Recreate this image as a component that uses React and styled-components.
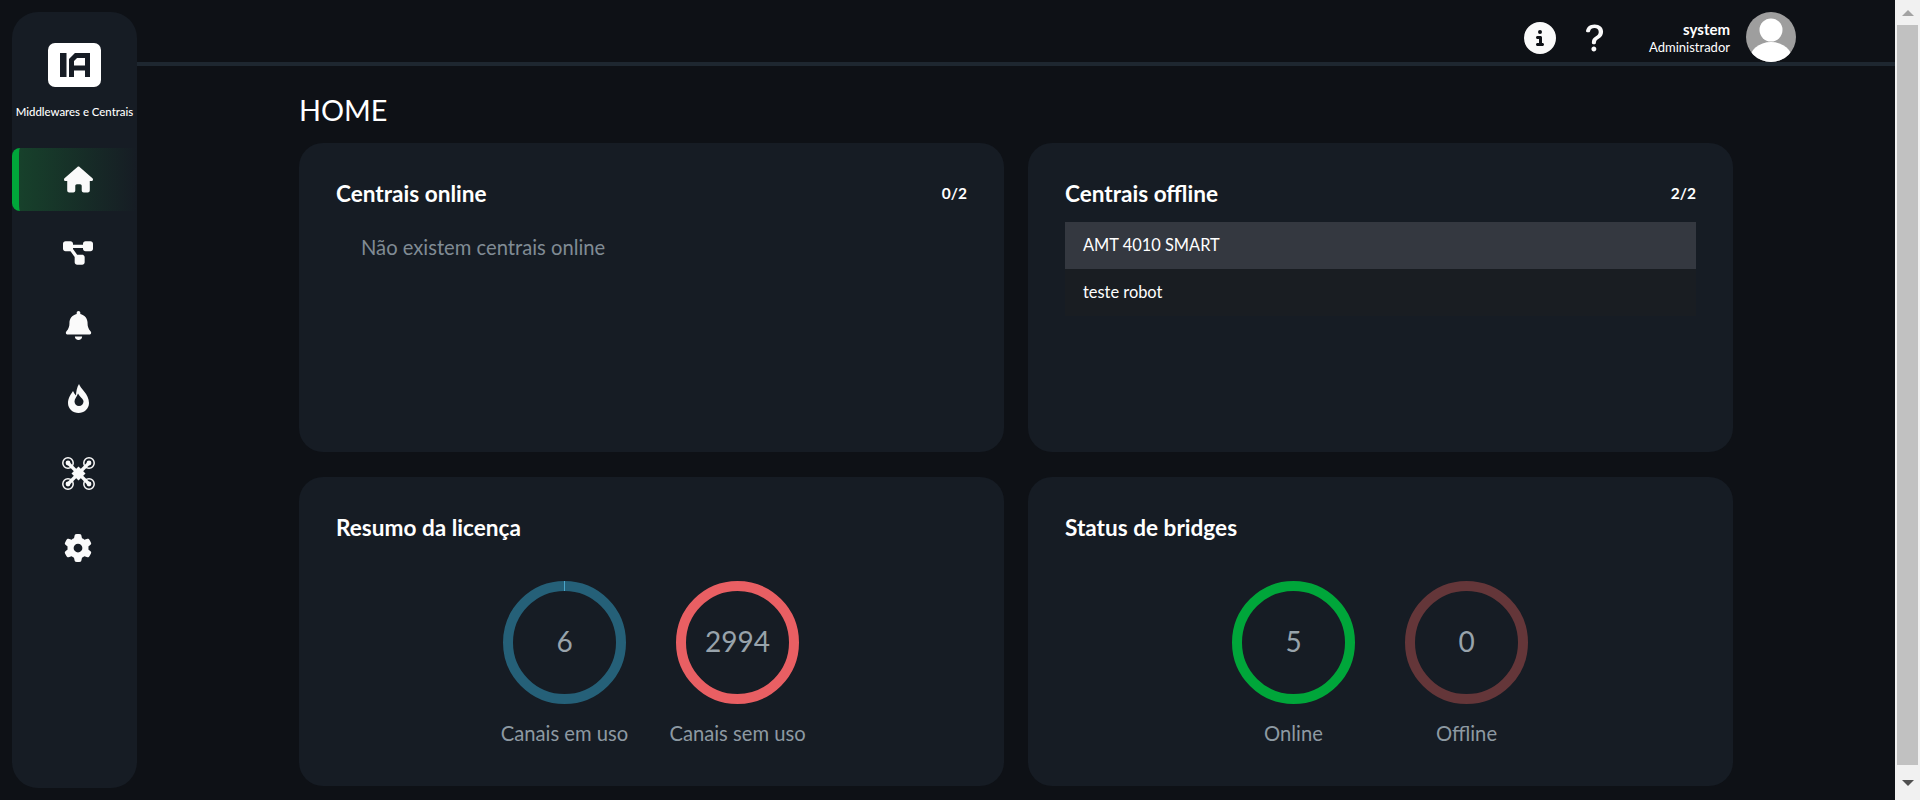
import React from "react";
import styled, { createGlobalStyle } from "styled-components";
import { FaHouse, FaDiagramProject, FaBell, FaGear, FaCircleInfo } from "react-icons/fa6";
import { BsQuestionLg } from "react-icons/bs";

const Global = createGlobalStyle`
  html, body { margin: 0; height: 100%; overflow: hidden; background: #0e1116; }
  body { font-family: "Lato", "Noto Sans", sans-serif; color: #fff; }
  * { box-sizing: border-box; }
`;

const Page = styled.div`
  display: flex;
  width: 1920px;
  height: 800px;
  background: #0e1116;
`;

const Sidebar = styled.aside`
  flex: 0 0 125px;
  height: 776px;
  margin: 12px 0 0 12px;
  padding-top: 31px;
  border-radius: 26px;
  background: #161c24;
  display: flex;
  flex-direction: column;
  align-items: center;
`;

const Caption = styled.div`
  margin-top: 17px;
  font-size: 11.4px;
  line-height: 16px;
  font-weight: 500;
  white-space: nowrap;
`;

const Nav = styled.nav`
  align-self: stretch;
  margin-top: 28px;
  display: flex;
  flex-direction: column;
  gap: 10px;
`;

const NavItem = styled.a`
  height: 63px;
  margin-top: ${p => p.$shift || 0}px;
  display: flex;
  align-items: center;
  justify-content: center;
  color: #fafafa;
  border-radius: 8px 0 0 8px;
  border-left: 7px solid ${p => (p.$active ? "#00a63a" : "transparent")};
  background: ${p => (p.$active ? "linear-gradient(90deg, #17412b 0%, #16301f00 100%)" : "none")};
`;

const Main = styled.div`
  flex: 1;
  min-width: 0;
  display: flex;
  flex-direction: column;
`;

const Header = styled.header`
  height: 66px;
  border-bottom: 4px solid #1e2730;
  padding-right: 99px;
  display: flex;
  align-items: flex-start;
  justify-content: flex-end;
`;

const InfoButton = styled.span`
  display: flex;
  margin-top: 22px;
  color: #fafafa;
`;

const HelpButton = styled.span`
  display: flex;
  margin: 20px 0 0 21px;
  color: #fafafa;
`;

const User = styled.div`
  margin: 20px 0 0 17px;
  width: 100px;
  text-align: right;
`;

const UserName = styled.div`
  font-size: 15px;
  line-height: 19px;
  font-weight: 700;
`;

const UserRole = styled.div`
  font-size: 13px;
  line-height: 17px;
`;

const Avatar = styled.svg`
  margin: 12px 0 0 16px;
  width: 50px;
  height: 50px;
  display: block;
`;

const Content = styled.main`
  padding: 24px 0 0 162px;
`;

const Title = styled.h1`
  margin: 0 0 13px;
  font-size: 28.8px;
  line-height: 40px;
  font-weight: 400;
`;

const Grid = styled.div`
  display: grid;
  grid-template-columns: 705px 705px;
  grid-template-rows: 309px 309px;
  column-gap: 24px;
  row-gap: 25px;
`;

const Card = styled.section`
  background: #161c24;
  border-radius: 24px;
  padding: 32px 37px 0;
`;

const CardHead = styled.div`
  display: flex;
  justify-content: space-between;
  align-items: center;
  height: 36px;
`;

const CardTitle = styled.h2`
  margin: 0;
  font-size: 22.6px;
  font-weight: 700;
`;

const Count = styled.span`
  font-size: 15.5px;
  font-weight: 700;
`;

const Empty = styled.p`
  margin: 21px 0 0 25px;
  font-size: 20.2px;
  line-height: 30px;
  color: #808b94;
`;

const List = styled.ul`
  list-style: none;
  margin: 11px 0 0;
  padding: 0;
`;

const ListRow = styled.li`
  height: 47px;
  padding: 0 0 2px 18px;
  display: flex;
  align-items: center;
  font-size: 16.4px;
  background: ${p => (p.$active ? "#343840" : "#191d22")};
`;

const Rings = styled.div`
  margin-top: 36px;
  padding-right: 1px;
  display: flex;
  justify-content: center;
  gap: 50px;
`;

const RingItem = styled.div`
  width: 123px;
  display: flex;
  flex-direction: column;
  align-items: center;
`;

const RingBox = styled.div`
  position: relative;
  width: 123px;
  height: 123px;
`;

const RingSvg = styled.svg`
  display: block;
  width: 123px;
  height: 123px;
`;

const RingValue = styled.span`
  position: absolute;
  inset: 0 0 3px;
  display: flex;
  align-items: center;
  justify-content: center;
  font-size: 28px;
  color: #98a3ab;
`;

const RingLabel = styled.span`
  margin-top: 15px;
  font-size: 20.2px;
  line-height: 28px;
  white-space: nowrap;
  color: #8d99a2;
`;

const ScrollTrack = styled.div`
  flex: 0 0 25px;
  height: 800px;
  background: #f1f1f1;
  display: flex;
  flex-direction: column;
  align-items: center;
`;

const ScrollButton = styled.div`
  flex: 0 0 ${p => p.$h}px;
  width: 100%;
  display: flex;
  align-items: center;
  justify-content: center;
`;

const Arrow = styled.span`
  width: 0;
  height: 0;
  border-left: 6px solid transparent;
  border-right: 6px solid transparent;
  ${p => p.$down
    ? "border-top: 6px solid #505050;"
    : "border-bottom: 6px solid #a3a3a3;"}
`;

const Thumb = styled.div`
  flex: 0 0 740px;
  width: 21px;
  background: #c1c1c1;
`;

const Logo = () => (
  <svg width="53" height="44" viewBox="0 0 53 44" style={{ display: "block" }}>
    <rect width="53" height="44" rx="7" fill="#fff" />
    <rect x="12" y="10" width="6.5" height="24" fill="#161c24" />
    <path d="M23.5 34V17L28 12.5H39.5V34M23.5 25H39.5" fill="none" stroke="#161c24" strokeWidth="5" />
  </svg>
);

const Flame = () => (
  <svg width="21" height="29" viewBox="0 0 21 29">
    <path
      fill="#fafafa"
      fillRule="evenodd"
      d="M11 0C12 4 21 10 21 19C21 25 16 29 10.5 29C5 29 0 25 0 19C0 14 3 10 5 7C6 9 7 10.5 8 11.5C8 8 9 3 11 0ZM10 9.5C8.5 13 6.5 15 6.5 17.5C6.5 20 8.5 22 11 22C13.5 22 15.5 20 15.5 17.5C15.5 15 12 13 10 9.5Z"
    />
  </svg>
);

const Drone = () => (
  <svg width="33" height="33" viewBox="0 0 33 33">
    <g fill="none" stroke="#fafafa" strokeWidth="1.5">
      <circle cx="6" cy="6" r="5.2" />
      <circle cx="27" cy="6" r="5.2" />
      <circle cx="6" cy="27" r="5.2" />
      <circle cx="27" cy="27" r="5.2" />
    </g>
    <g fill="none" stroke="#fafafa" strokeWidth="3.2" strokeLinecap="round">
      <path d="M7 7L26 26M26 7L7 26" />
    </g>
    <path d="M16.5 9.5L23.5 16.5L16.5 23.5L9.5 16.5Z" fill="#fafafa" />
    <g fill="#fafafa">
      <circle cx="6" cy="6" r="2.4" />
      <circle cx="27" cy="6" r="2.4" />
      <circle cx="6" cy="27" r="2.4" />
      <circle cx="27" cy="27" r="2.4" />
    </g>
  </svg>
);

const Ring = ({ value, label, color, tick }) => (
  <RingItem>
    <RingBox>
      <RingSvg viewBox="0 0 123 123">
        <circle cx="61.5" cy="61.5" r="56.5" fill="none" stroke={color} strokeWidth="10" />
        {tick && <rect x="61" y="0" width="1" height="10" fill={tick} />}
      </RingSvg>
      <RingValue>{value}</RingValue>
    </RingBox>
    <RingLabel>{label}</RingLabel>
  </RingItem>
);

export default function App() {
  return (
    <Page>
      <Global />
      <Sidebar>
        <Logo />
        <Caption>Middlewares e Centrais</Caption>
        <Nav>
          <NavItem $active><FaHouse size={29} /></NavItem>
          <NavItem><FaDiagramProject size={30} /></NavItem>
          <NavItem><FaBell size={29} /></NavItem>
          <NavItem><Flame /></NavItem>
          <NavItem $shift={2}><Drone /></NavItem>
          <NavItem $shift={1}><FaGear size={28} /></NavItem>
        </Nav>
      </Sidebar>
      <Main>
        <Header>
          <InfoButton><FaCircleInfo size={32} /></InfoButton>
          <HelpButton><BsQuestionLg size={36} /></HelpButton>
          <User>
            <UserName>system</UserName>
            <UserRole>Administrador</UserRole>
          </User>
          <Avatar viewBox="0 0 50 50">
            <defs>
              <clipPath id="avatar-clip"><circle cx="25" cy="25" r="25" /></clipPath>
            </defs>
            <circle cx="25" cy="25" r="25" fill="#9e9e9e" />
            <g clipPath="url(#avatar-clip)" fill="#fff">
              <circle cx="25" cy="18" r="11.5" />
              <ellipse cx="25" cy="49" rx="22" ry="19" />
            </g>
          </Avatar>
        </Header>
        <Content>
          <Title>HOME</Title>
          <Grid>
            <Card>
              <CardHead>
                <CardTitle>Centrais online</CardTitle>
                <Count>0/2</Count>
              </CardHead>
              <Empty>Não existem centrais online</Empty>
            </Card>
            <Card>
              <CardHead>
                <CardTitle>Centrais offline</CardTitle>
                <Count>2/2</Count>
              </CardHead>
              <List>
                <ListRow $active>AMT 4010 SMART</ListRow>
                <ListRow>teste robot</ListRow>
              </List>
            </Card>
            <Card>
              <CardHead>
                <CardTitle>Resumo da licença</CardTitle>
              </CardHead>
              <Rings>
                <Ring value="6" label="Canais em uso" color="#256078" tick="#4aa5c9" />
                <Ring value="2994" label="Canais sem uso" color="#e95f63" />
              </Rings>
            </Card>
            <Card>
              <CardHead>
                <CardTitle>Status de bridges</CardTitle>
              </CardHead>
              <Rings>
                <Ring value="5" label="Online" color="#00a63a" />
                <Ring value="0" label="Offline" color="#643639" />
              </Rings>
            </Card>
          </Grid>
        </Content>
      </Main>
      <ScrollTrack>
        <ScrollButton $h={25}><Arrow /></ScrollButton>
        <Thumb />
        <ScrollButton $h={35}><Arrow $down /></ScrollButton>
      </ScrollTrack>
    </Page>
  );
}
